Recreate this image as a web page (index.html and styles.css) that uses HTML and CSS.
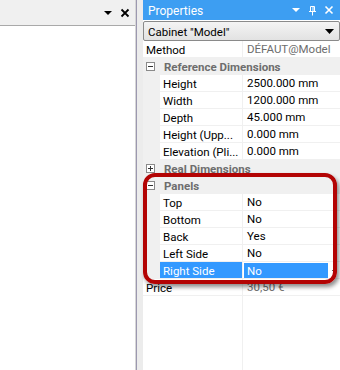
FILE: index.html
```html
<!DOCTYPE html>
<html lang="en">
<head>
    <meta charset="UTF-8">
    <title>Properties</title>
    <link rel="stylesheet" href="styles.css">
</head>
<body>
<div class="app">
    <div class="pane pane-left">
        <div class="title title-light">
            <span class="title-text"></span>
            <svg class="ico" width="10" height="6" viewBox="0 0 10 6"><path d="M1 1h8L5 5z" fill="#000"/></svg>
            <svg class="ico" width="10" height="10" viewBox="0 0 10 10"><path d="M1.5 1.5l7 7M8.5 1.5l-7 7" stroke="#000" stroke-width="1.8"/></svg>
        </div>
        <div class="pane-body"></div>
    </div>
    <div class="splitter"></div>
    <div class="pane pane-props">
        <div class="title title-blue">
            <span class="title-text">Properties</span>
            <svg class="ico" width="10" height="6" viewBox="0 0 10 6"><path d="M1 1h8L5 5z" fill="#fff"/></svg>
            <svg class="ico" width="9" height="11" viewBox="0 0 9 11"><path d="M2.5 1.5h4v5h-4zM1 6.5h7M4.5 6.5v4" stroke="#fff" fill="none"/><path d="M5 2v4" stroke="#fff"/></svg>
            <svg class="ico" width="10" height="10" viewBox="0 0 10 10"><path d="M1.5 1.5l7 7M8.5 1.5l-7 7" stroke="#fff" stroke-width="1.6"/></svg>
        </div>
        <div class="combo">
            <span class="combo-text">Cabinet "Model"</span>
            <svg width="9" height="5" viewBox="0 0 9 5"><path d="M0 0h9L4.5 5z" fill="#000"/></svg>
        </div>

        <div class="grid">
            <div class="row">
                <div class="name wide">Method</div>
                <div class="value dim">DÉFAUT@Model</div>
            </div>

            <div class="row cat">
                <svg class="toggle" width="9" height="9" viewBox="0 0 9 9"><rect x=".5" y=".5" width="8" height="8" fill="#fff" stroke="#8a8a8a"/><path d="M2 4.5h5" stroke="#333"/></svg>
                <span>Reference Dimensions</span>
            </div>
            <div class="row">
                <div class="gutter"></div>
                <div class="name">Height</div>
                <div class="value">2500.000 mm</div>
            </div>
            <div class="row">
                <div class="gutter"></div>
                <div class="name">Width</div>
                <div class="value">1200.000 mm</div>
            </div>
            <div class="row">
                <div class="gutter"></div>
                <div class="name">Depth</div>
                <div class="value">45.000 mm</div>
            </div>
            <div class="row">
                <div class="gutter"></div>
                <div class="name">Height (Upp...</div>
                <div class="value">0.000 mm</div>
            </div>
            <div class="row">
                <div class="gutter"></div>
                <div class="name">Elevation (Pli...</div>
                <div class="value">0.000 mm</div>
            </div>

            <div class="row cat">
                <svg class="toggle" width="9" height="9" viewBox="0 0 9 9"><rect x=".5" y=".5" width="8" height="8" fill="#fff" stroke="#8a8a8a"/><path d="M2 4.5h5M4.5 2v5" stroke="#333"/></svg>
                <span>Real Dimensions</span>
            </div>

            <div class="row cat">
                <svg class="toggle" width="9" height="9" viewBox="0 0 9 9"><rect x=".5" y=".5" width="8" height="8" fill="#fff" stroke="#8a8a8a"/><path d="M2 4.5h5" stroke="#333"/></svg>
                <span>Panels</span>
            </div>
            <div class="row">
                <div class="gutter"></div>
                <div class="name">Top</div>
                <div class="value">No</div>
            </div>
            <div class="row">
                <div class="gutter"></div>
                <div class="name">Bottom</div>
                <div class="value">No</div>
            </div>
            <div class="row">
                <div class="gutter"></div>
                <div class="name">Back</div>
                <div class="value">Yes</div>
            </div>
            <div class="row">
                <div class="gutter"></div>
                <div class="name">Left Side</div>
                <div class="value">No</div>
            </div>
            <div class="row selected">
                <div class="gutter"></div>
                <div class="name">Right Side</div>
                <div class="value">
                    <span class="edit">No</span>
                    <svg class="drop" width="5" height="3" viewBox="0 0 5 3"><path d="M0 0h5L2.5 3z" fill="#000"/></svg>
                </div>
            </div>

            <div class="row">
                <div class="name wide">Price</div>
                <div class="value dim">30,50 €</div>
            </div>

            <div class="filler">
                <div class="filler-left"></div>
            </div>
        </div>

        <!-- annotation -->
        <div class="mark"></div>
    </div>
</div>
</body>
</html>
```

FILE: styles.css
```css
html, body{
    margin: 0;
    padding: 0;
    background: #fff;
}
.app{
    display: flex;
    width: 340px;
    height: 370px;
    overflow: hidden;
    font-family: Roboto, "Open Sans", sans-serif;
    font-size: 11.5px;
    color: #000;
}

/* panneau de gauche */
.pane-left{
    width: 135px;
    display: flex;
    flex-direction: column;
    border-right: 1px solid #d6d6d6;
}
.title{
    display: flex;
    align-items: center;
    gap: 8px;
    flex-shrink: 0;
}
.title-light{
    height: 25px;
    background: #f0f0f0;
    border-bottom: 1px solid #a9a9a9;
    padding-right: 5px;
    gap: 7px;
}
.title-text{
    flex: 1;
}
.pane-body{
    flex: 1;
    background: #fff;
}
.splitter{
    width: 6px;
    background: #ececec;
    border-left: 1px solid #9c98b0;
}

/* panneau des propriétés */
.pane-props{
    position: relative;
    flex: 1;
    display: flex;
    flex-direction: column;
    background: #fff;
}
.title-blue{
    height: 20px;
    background: #3d9ef2;
    color: #fff;
    font-size: 12px;
    padding: 0 6px 0 5px;
    gap: 7px;
}
.title-blue .title-text{
    padding-top: 1px;
}
.combo{
    height: 18px;
    margin-top: 1px;
    display: flex;
    align-items: center;
    padding: 0 5px 0 4px;
    border: 1px solid #8a8a8a;
    border-radius: 2px;
    background: linear-gradient(#f4f4f4, #e2e2e2);
}
.combo-text{
    flex: 1;
    padding-top: 1px;
}

.grid{
    flex: 1;
    display: flex;
    flex-direction: column;
}
.row{
    display: flex;
    height: 16px;
    line-height: 18px;
    border-bottom: 1px solid #f0f0f0;
    white-space: nowrap;
}
.gutter{
    width: 17px;
    background: #f0f0f0;
}
.name{
    width: 79px;
    padding-left: 3px;
    border-right: 1px solid #f0f0f0;
    overflow: hidden;
}
.name.wide{
    width: 96px;
}
.value{
    flex: 1;
    padding-left: 4px;
    display: flex;
    align-items: center;
}
.dim{
    color: #6d6d6d;
}
.cat{
    background: #f0f0f0;
    align-items: center;
    color: #6d6d6d;
    font-weight: bold;
}
.cat span{
    padding-top: 2px;
}
.toggle{
    margin: 0 9px 0 3px;
}

/* ligne sélectionnée */
.selected .name{
    background: #3399ff;
    color: #fff;
}
.selected .value{
    padding-left: 1px;
}
.edit{
    width: 81px;
    height: 15px;
    line-height: 17px;
    padding-left: 3px;
    background: #3399ff;
    color: #fff;
}
.drop{
    margin-left: 4px;
    margin-top: 3px;
}

.filler{
    flex: 1;
    display: flex;
}
.filler-left{
    width: 99px;
    border-right: 1px solid #f0f0f0;
}

/* cadre rouge */
.mark{
    position: absolute;
    left: 0;
    top: 173px;
    width: 186px;
    height: 103px;
    border: 4px solid #b30404;
    border-radius: 12px;
    box-shadow: 2px 3px 4px rgba(0, 0, 0, 0.45);
}
```
